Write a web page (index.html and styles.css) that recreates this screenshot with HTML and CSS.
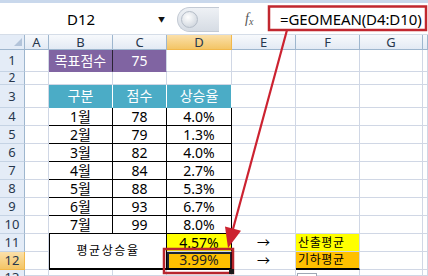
FILE: index.html
```html
<!DOCTYPE html>
<html lang="ko">
<head>
    <meta charset="UTF-8">
    <title>GEOMEAN</title>
    <link rel="stylesheet" href="styles.css">
</head>
<body>
    <div class="formula-bar">
        <div class="name-box">
            <span class="cell-ref">D12</span>
            <span class="drop">&#9660;</span>
        </div>
        <div class="splitter"><span class="knob"></span></div>
        <div class="fx">f<small>x</small></div>
        <div class="formula-input">=GEOMEAN(D4:D10)</div>
    </div>

    <div class="sheet">
        <!-- column headers -->
        <div class="corner">
            <svg width="10" height="10" viewBox="0 0 10 10"><polygon points="9,1 9,9 1,9" fill="#b3c4da"/></svg>
        </div>
        <div class="ch">A</div>
        <div class="ch">B</div>
        <div class="ch">C</div>
        <div class="ch sel">D</div>
        <div class="ch">E</div>
        <div class="ch">F</div>
        <div class="ch">G</div>
        <div class="ch"></div>

        <!-- row 1 -->
        <div class="rh">1</div>
        <div></div>
        <div class="purple split">목표점수</div>
        <div class="purple">75</div>
        <div></div><div></div><div></div><div></div><div></div>

        <!-- row 2 -->
        <div class="rh short">2</div>
        <div></div><div></div><div></div><div></div><div></div><div></div><div></div><div></div>

        <!-- row 3 -->
        <div class="rh">3</div>
        <div></div>
        <div class="teal">구분</div>
        <div class="teal">점수</div>
        <div class="teal">상승율</div>
        <div></div><div></div><div></div><div></div>

        <div class="rh">4</div>
        <div></div>
        <div class="tb">1월</div><div class="tb">78</div><div class="tb">4.0%</div>
        <div></div><div></div><div></div><div></div>

        <div class="rh">5</div>
        <div></div>
        <div class="tb">2월</div><div class="tb">79</div><div class="tb">1.3%</div>
        <div></div><div></div><div></div><div></div>

        <div class="rh">6</div>
        <div></div>
        <div class="tb">3월</div><div class="tb">82</div><div class="tb">4.0%</div>
        <div></div><div></div><div></div><div></div>

        <div class="rh">7</div>
        <div></div>
        <div class="tb">4월</div><div class="tb">84</div><div class="tb">2.7%</div>
        <div></div><div></div><div></div><div></div>

        <div class="rh">8</div>
        <div></div>
        <div class="tb">5월</div><div class="tb">88</div><div class="tb">5.3%</div>
        <div></div><div></div><div></div><div></div>

        <div class="rh">9</div>
        <div></div>
        <div class="tb">6월</div><div class="tb">93</div><div class="tb">6.7%</div>
        <div></div><div></div><div></div><div></div>

        <div class="rh">10</div>
        <div></div>
        <div class="tb">7월</div><div class="tb">99</div><div class="tb">8.0%</div>
        <div></div><div></div><div></div><div></div>

        <!-- rows 11-12 -->
        <div class="rh">11</div>
        <div></div>
        <div class="avg-label">평균상승율</div>
        <div class="yellow tb-r">4.57%</div>
        <div class="arrow">→</div>
        <div class="yellow label">산출평균</div>
        <div></div><div></div>

        <div class="rh sel">12</div>
        <div></div>
        <div class="orange tb-r active">3.99%</div>
        <div class="arrow">→</div>
        <div class="orange label thick">기하평균</div>
        <div></div><div></div>

        <div class="rh last">13</div>
        <div></div><div></div><div></div><div></div><div></div><div></div><div></div><div></div>
    </div>

    <svg class="marks" width="428" height="276" viewBox="0 0 428 276">
        <rect x="269" y="6.5" width="157" height="23.5" fill="none" stroke="#c1272f" stroke-width="2.5"/>
        <rect x="164" y="249" width="69" height="24" fill="none" stroke="#b8262e" stroke-width="2.5"/>
        <rect x="229" y="269" width="5" height="5" fill="#1a1a1a"/>
        <rect x="297.5" y="273.5" width="19" height="8" fill="#fff" stroke="#a0a8b4"/>
        <line x1="287" y1="30" x2="233" y2="229" stroke="#cc2230" stroke-width="2.2"/>
        <polygon points="228,248 225,226.5 241,230.8" fill="#cc2230"/>
    </svg>
</body>
</html>
```

FILE: styles.css
```css
* {
    margin: 0;
    padding: 0;
    box-sizing: border-box;
}

body {
    width: 428px;
    height: 276px;
    overflow: hidden;
    position: relative;
    background: #ffffff;
    font-family: "Noto Sans", "Noto Sans CJK KR", sans-serif;
    color: #000000;
}

/* formula bar */

.formula-bar {
    height: 35px;
    border-top: 3px solid #c9d8ec;
    border-bottom: 1px solid #d5dde8;
    display: flex;
    align-items: flex-start;
    padding-top: 4px;
    background: #ffffff;
}

.name-box {
    width: 172px;
    height: 24px;
    display: flex;
    align-items: center;
    position: relative;
}

.cell-ref {
    flex: 1;
    text-align: center;
    font-size: 15px;
    padding-left: 4px;
}

.drop {
    font-size: 7px;
    width: 14px;
    color: #111;
}

.splitter {
    margin-left: 5px;
    width: 42px;
    height: 25px;
    border-radius: 13px 0 0 13px;
    background: linear-gradient(#eef1f5, #d6dce4);
    border: 1px solid #c3cad4;
    border-right: none;
    display: flex;
    align-items: center;
    padding-left: 3px;
}

.knob {
    width: 17px;
    height: 17px;
    border-radius: 50%;
    background: radial-gradient(circle at 40% 35%, #ffffff, #c4ccd6);
    border: 1px solid #b5bdc8;
}

.fx {
    margin-left: 26px;
    width: 24px;
    height: 24px;
    display: flex;
    align-items: center;
    font-family: "Liberation Serif", serif;
    font-style: italic;
    font-size: 14px;
    color: #555;
}

.fx small {
    font-size: 10px;
    margin-top: 4px;
}

.formula-input {
    flex: 1;
    height: 24px;
    padding-left: 11px;
    display: flex;
    align-items: center;
    font-size: 15px;
    letter-spacing: -0.1px;
}

/* sheet grid */

.sheet {
    display: grid;
    grid-template-columns: 25px 24px 64px 54px 65px 64px 64px 63px 1fr;
    grid-template-rows: 15px 22px 13px 23px repeat(9, 18px) 1fr;
    height: 241px;
}

.sheet > div {
    border-right: 1px solid #d0d7e5;
    border-bottom: 1px solid #d0d7e5;
    display: flex;
    align-items: center;
    justify-content: center;
    font-size: 14px;
    line-height: 1;
    white-space: nowrap;
    overflow: hidden;
}

.sheet > .corner {
    background: #e4ecf7;
    border-color: #9eb6ce;
    justify-content: flex-end;
    align-items: flex-end;
    padding: 0 1px 2px 0;
}

.sheet > .ch {
    background: linear-gradient(#f7f9fc, #e3eaf4);
    border-right-color: #9eb6ce;
    border-bottom-color: #9eb6ce;
    font-size: 13px;
    color: #27374d;
    overflow: visible;
}

.sheet > .rh {
    background: #e4ecf7;
    border-right-color: #9eb6ce;
    border-bottom-color: #c5d3e4;
    font-size: 13px;
    color: #27374d;
}

.sheet > .short {
    font-size: 12px;
    overflow: visible;
}

.sheet > .last {
    align-items: flex-start;
    padding-top: 1px;
    border-bottom: none;
}

.sheet > .sel {
    background: linear-gradient(#fbe0aa, #f3c566);
    border-right-color: #f2b84b;
    border-bottom-color: #f2b84b;
}

/* table formatting */

.sheet > .purple {
    background: #8064a2;
    color: #ffffff;
    font-size: 14px;
    border-bottom-color: #8064a2;
}

.sheet > .split {
    border-right-color: #2a2333;
}

.sheet > .teal {
    background: #4bacc6;
    color: #ffffff;
    border-right-color: #ffffff;
    border-bottom-color: #4bacc6;
}

.sheet > .tb {
    border-right-color: #000;
    border-bottom-color: #000;
}

.sheet > .avg-label {
    grid-column: span 2;
    grid-row: span 2;
    border-left: 1px solid #000;
    border-right-color: #000;
    border-bottom: 2px solid #000;
    font-size: 12px;
    letter-spacing: 1.6px;
}

.sheet > .yellow {
    background: #ffff00;
}

.sheet > .orange {
    background: #ffc000;
}

.sheet > .tb-r {
    border-right-color: #000;
}

.sheet > .active {
    border-bottom: 2px solid #000;
    box-shadow: inset 2px 2px 0 #1d2433, inset -1px 0 0 #1d2433;
    color: #222;
    overflow: visible;
}

.sheet > .arrow {
    font-size: 13px;
}

.sheet > .label {
    justify-content: flex-start;
    padding-left: 2px;
    font-size: 12px;
    letter-spacing: 0.6px;
}

.sheet > .thick {
    border-bottom: 2px solid #000;
}

/* annotation overlay */

.marks {
    position: absolute;
    top: 0;
    left: 0;
    pointer-events: none;
}
```
